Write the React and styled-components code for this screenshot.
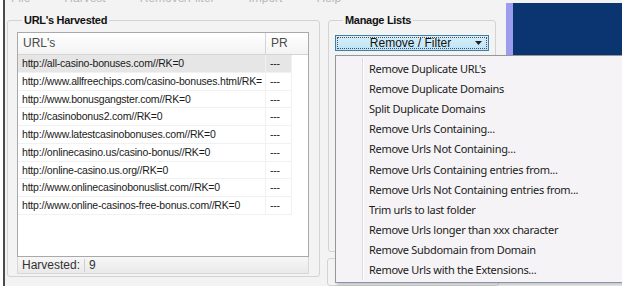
import React from 'react';
import styled, { createGlobalStyle } from 'styled-components';

const GlobalStyle = createGlobalStyle`
  body {
    margin: 0;
    background: #ffffff;
  }
`;

const urls = [
  'http://all-casino-bonuses.com//RK=0',
  'http://www.allfreechips.com/casino-bonuses.html/RK=',
  'http://www.bonusgangster.com//RK=0',
  'http://casinobonus2.com//RK=0',
  'http://www.latestcasinobonuses.com//RK=0',
  'http://onlinecasino.us/casino-bonus//RK=0',
  'http://online-casino.us.org//RK=0',
  'http://www.onlinecasinobonuslist.com//RK=0',
  'http://www.online-casinos-free-bonus.com//RK=0',
];

const menuItems = [
  "Remove Duplicate URL's",
  'Remove Duplicate Domains',
  'Split Duplicate Domains',
  'Remove Urls Containing...',
  'Remove Urls Not Containing...',
  'Remove Urls Containing entries from...',
  'Remove Urls Not Containing entries from...',
  'Trim urls to last folder',
  'Remove Urls longer than xxx character',
  'Remove Subdomain from Domain',
  'Remove Urls with the Extensions...',
];

const Window = styled.div`
  width: 617px;
  height: 286px;
  margin-left: 3px;
  border-left: 2px solid #4a4a4a;
  background: #f3f3f3;
  display: flex;
  overflow: hidden;
  font-family: "Liberation Sans", Arial, sans-serif;
`;

const Workspace = styled.div`
  width: 501px;
  display: flex;
  flex-direction: column;
`;

const TopStrip = styled.div`
  height: 4px;
  overflow: hidden;
  display: flex;
  align-items: flex-end;
  gap: 34px;
  padding-left: 6px;
  font-size: 12px;
  line-height: 12px;
  color: #b8b8b8;
  white-space: nowrap;
`;

const Panels = styled.div`
  display: flex;
  padding: 9px 0 0 2px;
  gap: 8px;
  flex: 1;
  min-height: 0;
`;

const Group = styled.fieldset`
  margin: 0;
  padding: 5px ${p => p.$padRight || 0}px ${p => p.$padBottom || 0}px ${p => p.$padLeft || 0}px;
  border: 1px solid #d3d3d3;
  border-radius: 3px;
  width: ${p => p.$width}px;
  box-sizing: border-box;
  min-width: 0;
  align-self: flex-start;
`;

const Legend = styled.legend`
  margin-left: ${p => p.$offset}px;
  padding: 0 2px;
  font-size: 11px;
  line-height: 14px;
  font-weight: bold;
  letter-spacing: -0.3px;
  color: #111;
`;

const ListPanel = styled.div`
  height: 242px;
  display: flex;
  flex-direction: column;
`;

const ListBox = styled.div`
  flex: 1;
  border: 1px solid #a9a9a9;
  background: #fff;
  display: flex;
  flex-direction: column;
`;

const HeaderRow = styled.div`
  display: flex;
  height: 21px;
  border-bottom: 1px solid #d5d5d5;
  background: linear-gradient(#ffffff, #f3f3f3);
`;

const HeaderCell = styled.div`
  width: ${p => p.$width}px;
  flex: ${p => (p.$grow ? 1 : 'none')};
  padding-left: 5px;
  box-sizing: border-box;
  border-right: ${p => (p.$grow ? 'none' : '1px solid #d5d5d5')};
  font-size: 12px;
  line-height: 21px;
  color: #4a4a4a;
`;

const Row = styled.div`
  display: flex;
  height: 17.75px;
  background: ${p => (p.$selected ? '#e6e6e6' : '#fff')};
  width: 274px;
`;

const Cell = styled.div`
  width: ${p => p.$width}px;
  box-sizing: border-box;
  padding-left: 4px;
  border-right: 1px solid #f1f1f1;
  border-bottom: 1px solid #f1f1f1;
  font-size: 10.5px;
  letter-spacing: -0.2px;
  line-height: 17px;
  color: #1a1a1a;
  white-space: nowrap;
  overflow: hidden;
`;

const StatusBar = styled.div`
  height: 16px;
  display: flex;
  align-items: center;
  background: linear-gradient(#f7f7f7, #e9e9e9);
  border: 1px solid #d8d8d8;
  border-top: none;
  font-size: 12px;
  color: #333;
`;

const StatusLabel = styled.span`
  padding: 0 4px 0 4px;
  border-right: 1px solid #cfcfcf;
  line-height: 13px;
`;

const StatusValue = styled.span`
  padding-left: 4px;
`;

const RightColumn = styled.div`
  display: flex;
  flex-direction: column;
  gap: 6px;
`;

const DropWrap = styled.div`
  position: relative;
  margin-top: 3px;
  height: 16px;
  width: 154px;
  padding-bottom: 192px;
`;

const DropButton = styled.div`
  height: 16px;
  box-sizing: border-box;
  border: 1px solid #3c7fb1;
  background: linear-gradient(#d6eff9, #bfe4f6);
  display: flex;
  align-items: center;
  padding: 1px;
  font-family: "Liberation Sans", Arial, sans-serif;
  font-size: 12px;
  color: #111;
`;

const FocusRect = styled.div`
  flex: 1;
  height: 100%;
  box-sizing: border-box;
  border: 1px dotted #4d4d4d;
  display: flex;
  align-items: center;
`;

const ButtonLabel = styled.span`
  flex: 1;
  text-align: center;
  padding-left: 8px;
`;

const Arrow = styled.svg`
  width: 7px;
  height: 4px;
  margin-right: 4px;
`;

const Menu = styled.div`
  position: absolute;
  top: 20px;
  left: 0;
  width: 300px;
  padding: 2px 0;
  background: #f5f3f5;
  border: 1px solid #979797;
  border-bottom-color: #8796ab;
  box-shadow: 2px 2px 3px rgba(0, 0, 0, 0.2);
  display: flex;
  flex-direction: column;
  z-index: 5;
`;

const MenuItem = styled.div`
  height: 20.2px;
  display: flex;
  align-items: center;
  font-family: "Noto Sans", "Open Sans", sans-serif;
  font-size: 11px;
  letter-spacing: -0.3px;
  color: #1b1b1b;
  white-space: nowrap;
`;

const IconGutter = styled.div`
  width: 26px;
  height: 100%;
  border-right: 1px solid #dcdadc;
  box-shadow: 1px 0 0 #ffffff;
  margin-right: 6px;
`;

const LowerGroup = styled.div`
  width: 170px;
  height: 40px;
  border: 1px solid #d3d3d3;
  border-radius: 3px;
  margin-left: -1px;
`;

const SidePanel = styled.div`
  width: 116px;
  padding-top: 3px;
  display: flex;
  flex-direction: column;
`;

const Banner = styled.div`
  height: 52px;
  display: flex;
`;

const BannerEdge = styled.div`
  width: 7px;
  background: #9d9df0;
`;

const BannerFill = styled.div`
  flex: 1;
  background: #0b3570;
`;

export default function App() {
  return (
    <>
      <GlobalStyle />
      <Window>
        <Workspace>
          <TopStrip>
            <span>File</span>
            <span>Harvest</span>
            <span>Remove/Filter</span>
            <span>Import</span>
            <span>Help</span>
          </TopStrip>
          <Panels>
            <Group $width={313} $padLeft={9} $padRight={10} $padBottom={2}>
              <Legend $offset={5}>URL's Harvested</Legend>
              <ListPanel>
                <ListBox>
                  <HeaderRow>
                    <HeaderCell $width={248}>URL's</HeaderCell>
                    <HeaderCell $grow>PR</HeaderCell>
                  </HeaderRow>
                  {urls.map((u, i) => (
                    <Row key={u} $selected={i === 0}>
                      <Cell $width={248}>{u}</Cell>
                      <Cell $width={26}>---</Cell>
                    </Row>
                  ))}
                </ListBox>
                <StatusBar>
                  <StatusLabel>Harvested:</StatusLabel>
                  <StatusValue>9</StatusValue>
                </StatusBar>
              </ListPanel>
            </Group>
            <RightColumn>
              <Group $width={168} $padLeft={6} $padBottom={8}>
                <Legend $offset={8}>Manage Lists</Legend>
                <DropWrap>
                  <DropButton>
                    <FocusRect>
                      <ButtonLabel>Remove / Filter</ButtonLabel>
                      <Arrow viewBox="0 0 7 4">
                        <path d="M0 0 L7 0 L3.5 4 Z" fill="#222" />
                      </Arrow>
                    </FocusRect>
                  </DropButton>
                  <Menu>
                    {menuItems.map(m => (
                      <MenuItem key={m}>
                        <IconGutter />
                        {m}
                      </MenuItem>
                    ))}
                  </Menu>
                </DropWrap>
              </Group>
              <LowerGroup />
            </RightColumn>
          </Panels>
        </Workspace>
        <SidePanel>
          <Banner>
            <BannerEdge />
            <BannerFill />
          </Banner>
        </SidePanel>
      </Window>
    </>
  );
}
